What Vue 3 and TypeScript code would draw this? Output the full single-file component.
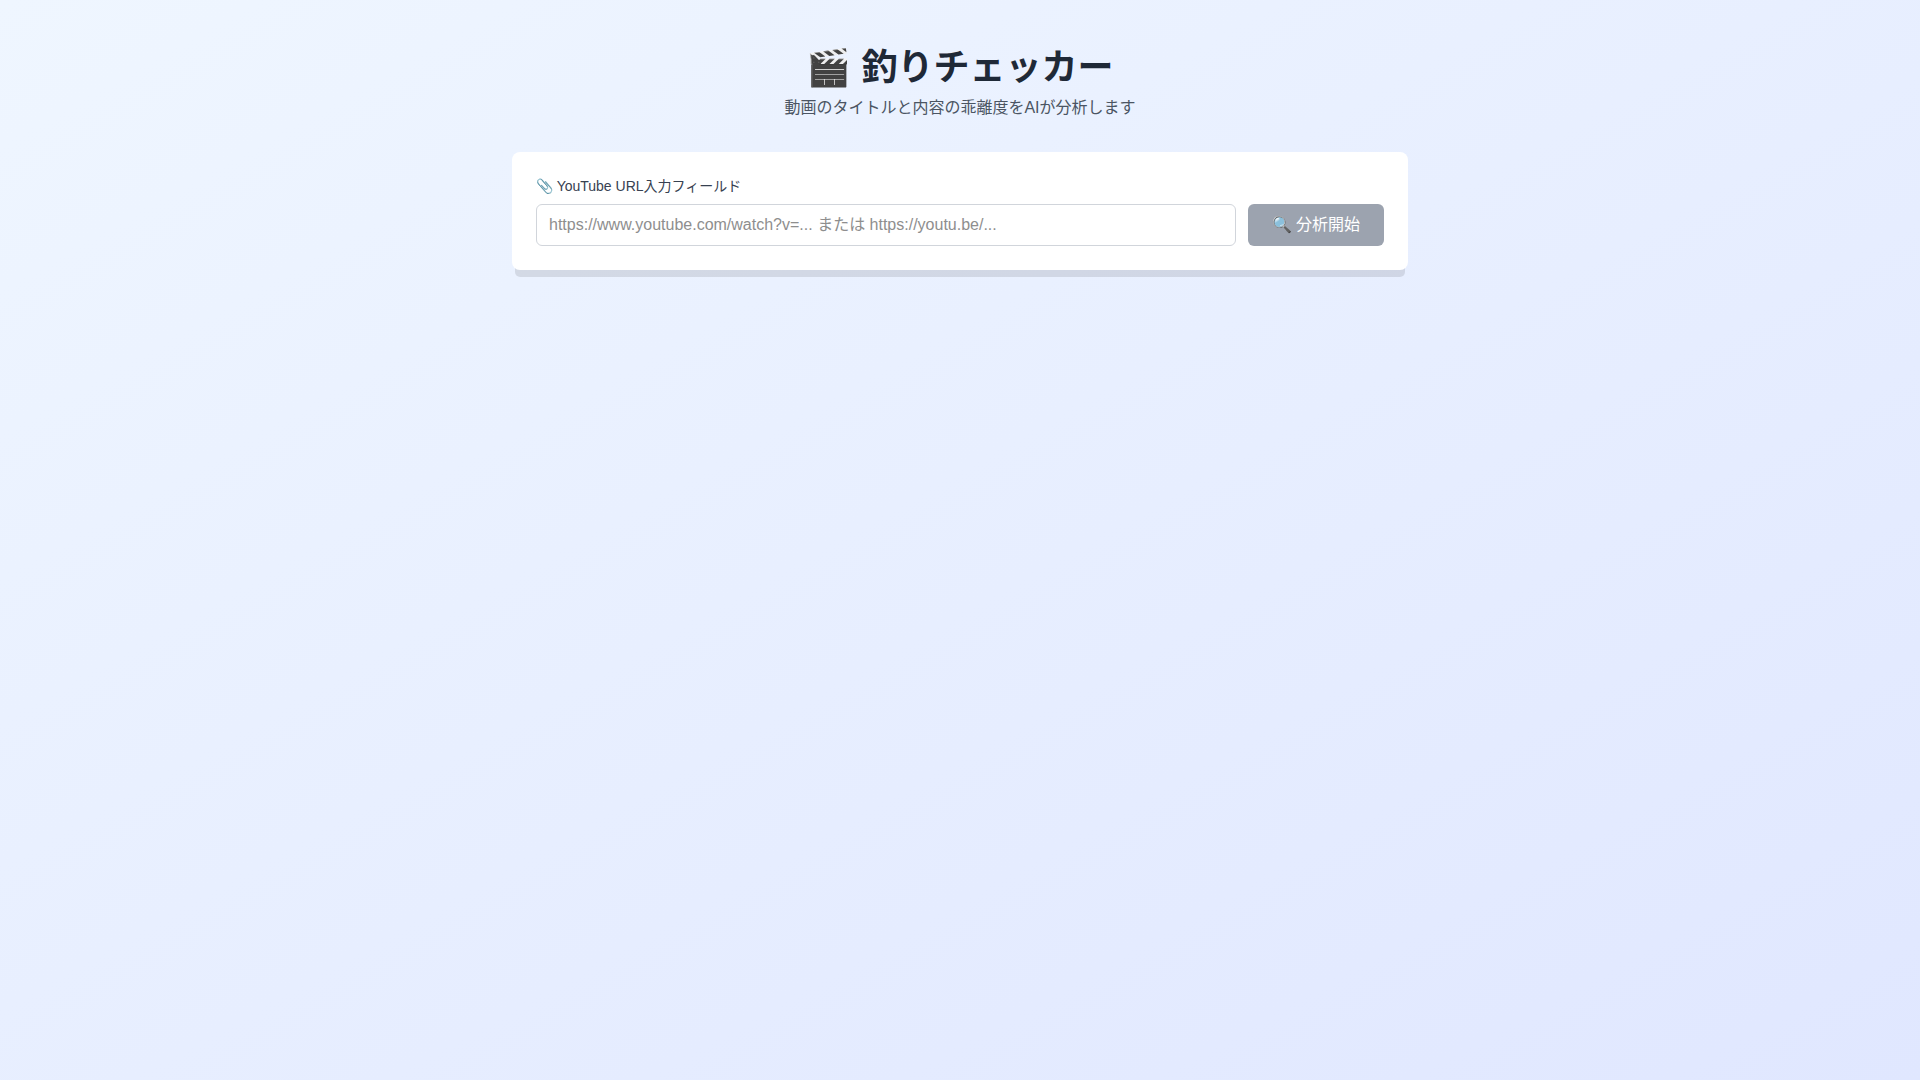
<script setup lang="ts">
import { computed, ref } from 'vue'

const url = ref('')
const canAnalyze = computed(() => url.value.trim().length > 0)
</script>

<template>
  <div class="page">
    <main class="container">
      <header class="header">
        <h1 class="title">🎬 釣りチェッカー</h1>
        <p class="subtitle">動画のタイトルと内容の乖離度をAIが分析します</p>
      </header>

      <form class="card" @submit.prevent>
        <label class="label" for="video-url">📎 YouTube URL入力フィールド</label>
        <div class="row">
          <input
            id="video-url"
            v-model="url"
            class="field"
            type="url"
            placeholder="https://www.youtube.com/watch?v=... または https://youtu.be/..."
          />
          <button class="submit" type="submit" :disabled="!canAnalyze">🔍 分析開始</button>
        </div>
      </form>
    </main>
  </div>
</template>

<style>
body {
  margin: 0;
}
</style>

<style scoped>
.page {
  box-sizing: border-box;
  min-height: 100vh;
  padding: 48px 16px;
  background: linear-gradient(to bottom right, #eff6ff, #e0e7ff);
  font-family: "Liberation Sans", "Noto Sans CJK JP", sans-serif;
  font-size: 16px;
  line-height: 24px;
}

.container {
  max-width: 896px;
  margin: 0 auto;
}

.header {
  margin-bottom: 32px;
  text-align: center;
}

.title {
  margin: 0 0 8px;
  color: #1f2937;
  font-size: 36px;
  font-weight: 700;
  line-height: 40px;
}

.subtitle {
  margin: 0;
  color: #4b5563;
}

.card {
  padding: 24px;
  border-radius: 8px;
  background: #fff;
  box-shadow: 0 10px 0 -3px rgba(0, 0, 0, 0.1);
}

.label {
  display: block;
  margin-bottom: 8px;
  color: #374151;
  font-size: 14px;
  line-height: 20px;
}

.row {
  display: flex;
  gap: 12px;
}

.field {
  box-sizing: border-box;
  flex: 1;
  min-width: 0;
  height: 42px;
  padding: 8px 12px;
  border: 1px solid #d1d5db;
  border-radius: 6px;
  background: #fff;
  color: #1f2937;
  font: inherit;
}

.field::placeholder {
  color: #8e8e8e;
}

.submit {
  padding: 8px 24px;
  border: 0;
  border-radius: 6px;
  background: #2563eb;
  color: #fff;
  font: inherit;
  cursor: pointer;
}

.submit:disabled {
  background: #9ca3af;
  cursor: not-allowed;
}
</style>
